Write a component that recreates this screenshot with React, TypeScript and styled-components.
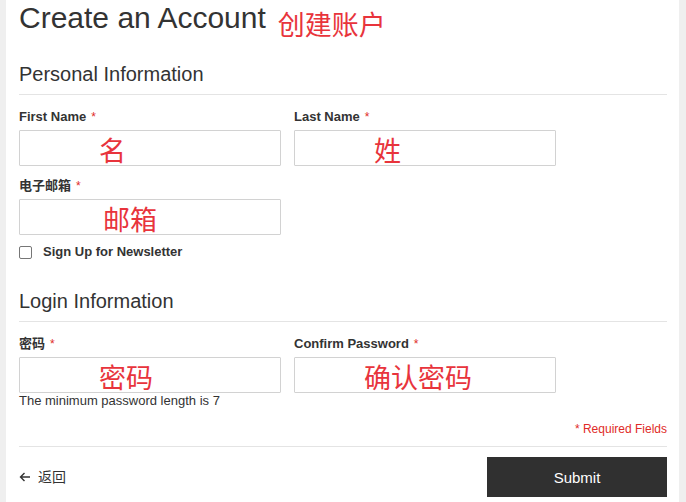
import { createGlobalStyle } from "styled-components";
import styled from "styled-components";

const GlobalStyle = createGlobalStyle`
	html, body {
		margin: 0;
		padding: 0;
	}
	body {
		background-color: #efefef;
		font-family: "Liberation Sans", Arial, "Noto Sans CJK SC", sans-serif;
		color: #333333;
	}
`;

const NOTE_RED = "#e8343c";

const Page = styled.div`
	display: flex;
	min-height: 502px;
	padding-left: 6px;
	padding-right: 7px;
	box-sizing: border-box;
`;

const Panel = styled.main`
	flex: 1;
	background-color: #ffffff;
	padding: 0 12px 0 13px;
	box-sizing: border-box;
`;

const TitleRow = styled.div`
	display: flex;
	align-items: flex-start;
	gap: 12px;
	h1 {
		margin: 0;
		font-size: 30px;
		line-height: 35px;
		font-weight: 400;
		color: #333333;
	}
`;

const Note = styled.span`
	font-family: "Noto Sans CJK SC", sans-serif;
	font-size: 27px;
	line-height: 27px;
	color: ${NOTE_RED};
	margin-top: 10px;
`;

const Legend = styled.h2<{ $gap: number }>`
	margin: ${({ $gap }) => $gap}px 0 0;
	padding-bottom: 8px;
	border-bottom: 1px solid #e4e4e4;
	font-size: 20px;
	line-height: 24px;
	font-weight: 400;
	color: #333333;
`;

const FieldRow = styled.div<{ $top: number }>`
	display: grid;
	grid-template-columns: 262px 262px;
	column-gap: 13px;
	margin-top: ${({ $top }) => $top}px;
`;

const Label = styled.label`
	display: block;
	font-size: 13px;
	line-height: 16px;
	font-weight: 700;
	color: #333333;
	margin-bottom: 5px;
	&::after {
		content: "*";
		color: #e02b27;
		font-size: 12px;
		font-weight: 400;
		margin-left: 5px;
	}
`;

const TextBox = styled.input<{ $indent: number }>`
	display: block;
	width: 100%;
	height: 36px;
	box-sizing: border-box;
	border: 1px solid #d2d2d2;
	border-radius: 1px;
	background: #ffffff;
	padding: 2px 0 0 ${({ $indent }) => $indent}px;
	font-family: "Noto Sans CJK SC", sans-serif;
	font-size: 27px;
	color: ${NOTE_RED};
	outline: none;
`;

const Hint = styled.div`
	font-size: 13px;
	line-height: 16px;
	color: #333333;
`;

const CheckRow = styled.label`
	display: flex;
	align-items: center;
	gap: 11px;
	margin-top: 9px;
	font-size: 13px;
	line-height: 16px;
	font-weight: 700;
	color: #333333;
	input {
		appearance: none;
		width: 13px;
		height: 13px;
		margin: 0;
		border: 1px solid #767676;
		border-radius: 2px;
		background: #ffffff;
	}
`;

const Required = styled.div`
	margin-top: 12px;
	text-align: right;
	font-size: 12px;
	line-height: 16px;
	color: #e02b27;
`;

const Actions = styled.div`
	display: flex;
	align-items: center;
	justify-content: space-between;
	margin-top: 9px;
	padding-top: 10px;
	border-top: 1px solid #e4e4e4;
`;

const BackLink = styled.a`
	display: flex;
	align-items: center;
	gap: 7px;
	font-size: 14px;
	line-height: 16px;
	color: #333333;
	text-decoration: none;
`;

const SubmitButton = styled.button`
	width: 180px;
	height: 40px;
	border: none;
	background-color: #303030;
	color: #ffffff;
	font-family: "Liberation Sans", Arial, sans-serif;
	font-size: 15px;
`;

interface FieldProps {
	label: string;
	note: string;
	indent: number;
}

const Field = ({ label, note, indent }: FieldProps): JSX.Element => (
	<div>
		<Label>{label}</Label>
		<TextBox $indent={indent} defaultValue={note} readOnly />
	</div>
);

const App = (): JSX.Element => {
	return (
		<>
			<GlobalStyle />
			<Page>
				<Panel>
					<TitleRow>
						<h1>Create an Account</h1>
						<Note>创建账户</Note>
					</TitleRow>

					<Legend $gap={25}>Personal Information</Legend>
					<FieldRow $top={14}>
						<Field label="First Name" note="名" indent={79} />
						<Field label="Last Name" note="姓" indent={79} />
					</FieldRow>
					<FieldRow $top={12}>
						<Field label="电子邮箱" note="邮箱" indent={83} />
					</FieldRow>
					<CheckRow>
						<input type="checkbox" />
						Sign Up for Newsletter
					</CheckRow>

					<Legend $gap={29}>Login Information</Legend>
					<FieldRow $top={14}>
						<Field label="密码" note="密码" indent={79} />
						<Field label="Confirm Password" note="确认密码" indent={69} />
					</FieldRow>
					<Hint>The minimum password length is 7</Hint>
					<Required>* Required Fields</Required>

					<Actions>
						<BackLink href="#">
							<svg width="12" height="10" viewBox="0 0 12 10" fill="none" stroke="#333" strokeWidth="1.4">
								<path d="M11 5H1.5M5.5 1L1.5 5l4 4" />
							</svg>
							返回
						</BackLink>
						<SubmitButton type="submit">Submit</SubmitButton>
					</Actions>
				</Panel>
			</Page>
		</>
	);
};

export default App;
